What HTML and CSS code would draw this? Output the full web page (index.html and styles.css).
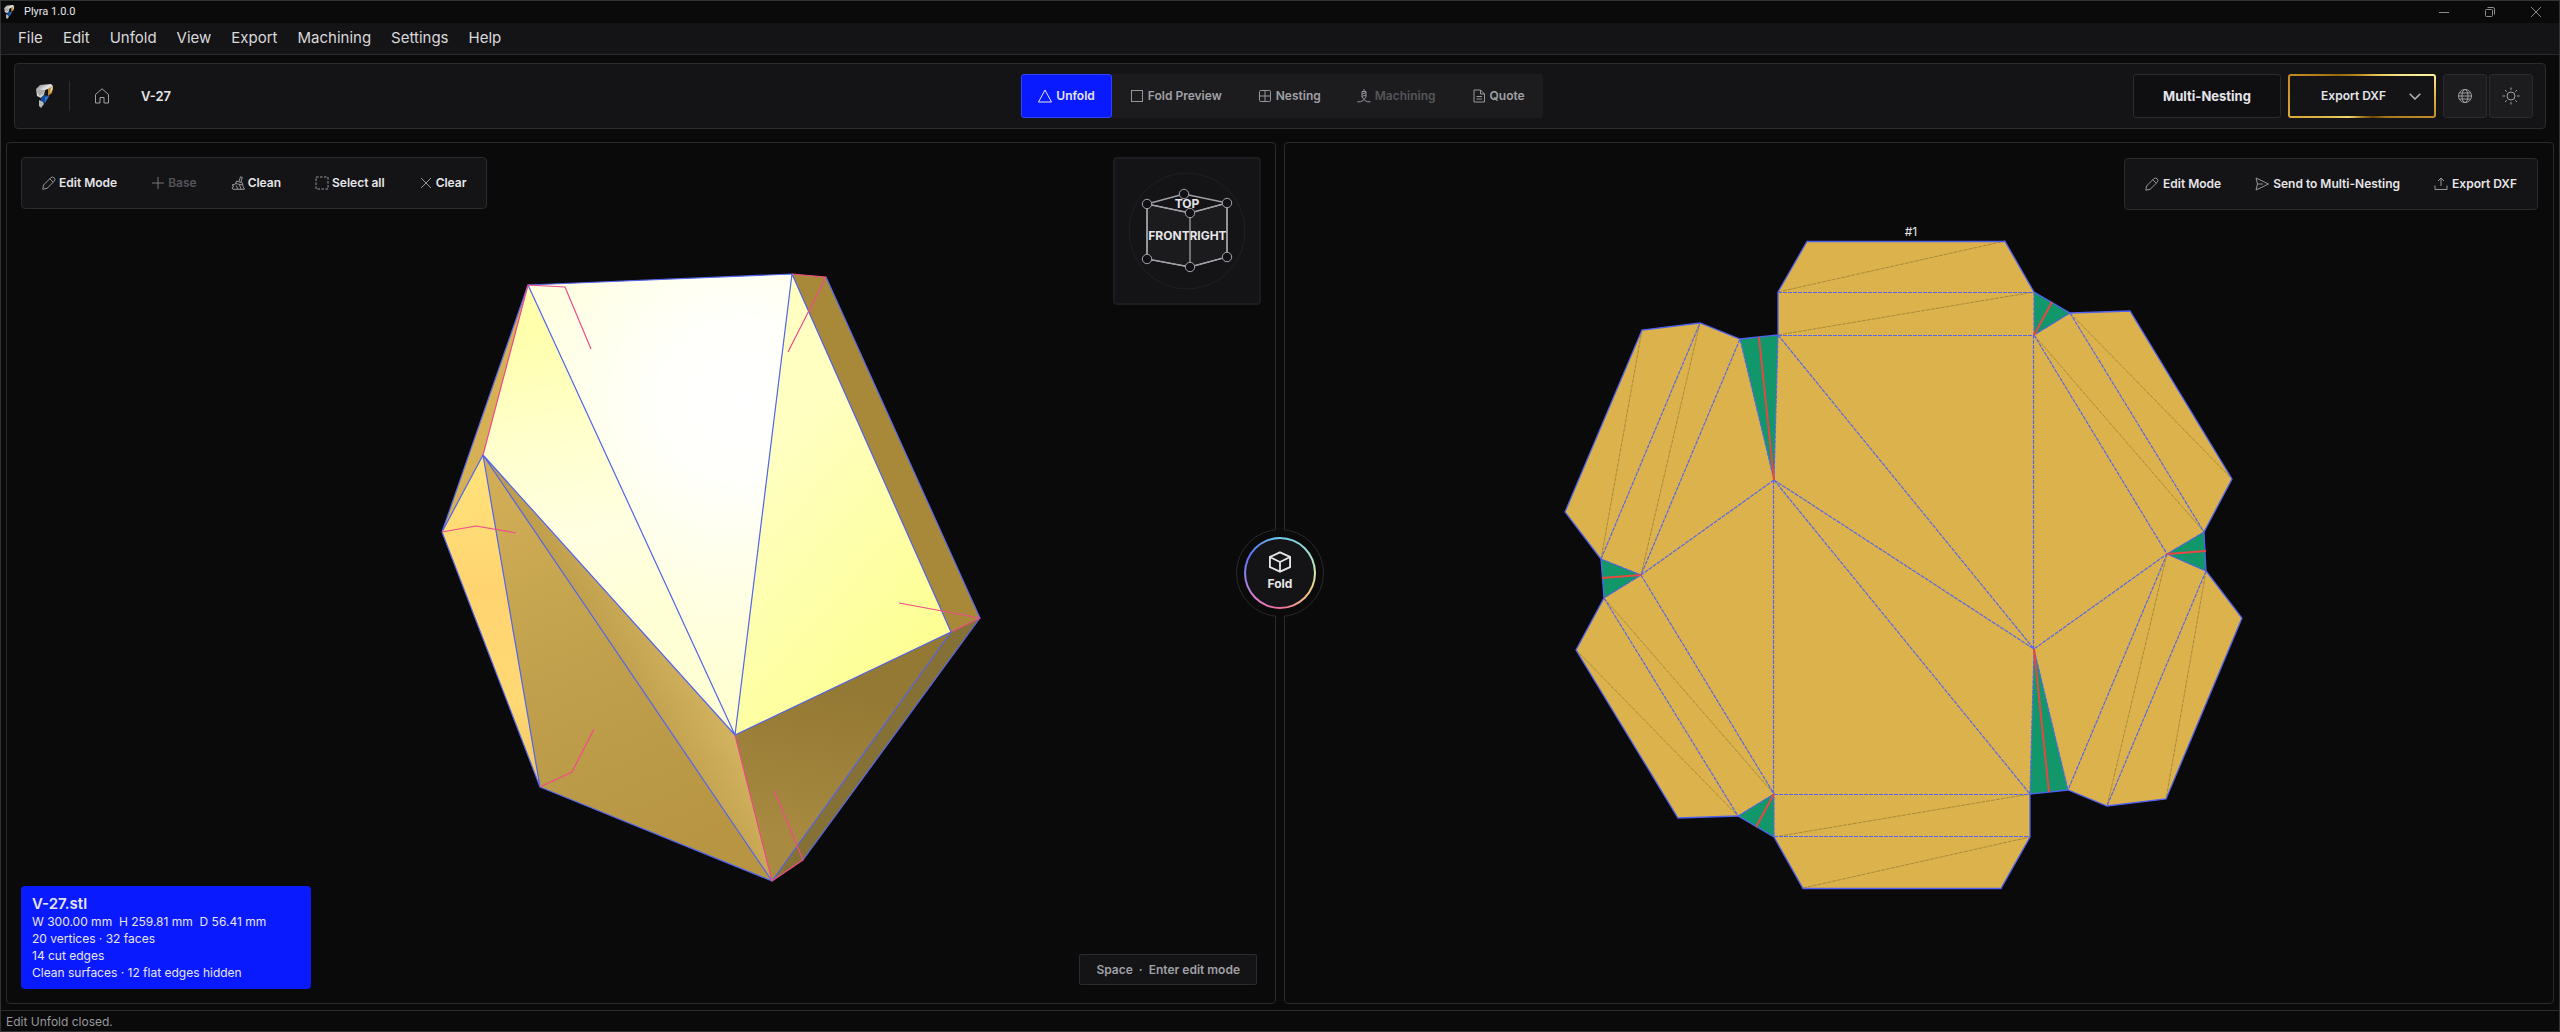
FILE: index.html
```html
<!DOCTYPE html>
<html lang="en">
<head>
<meta charset="utf-8">
<title>Plyra 1.0.0</title>
<link rel="stylesheet" href="styles.css">
</head>
<body>
<svg class="defs" aria-hidden="true">
  <defs>
    <linearGradient id="lg-silver" x1="0" y1="0" x2="1" y2="1"><stop offset="0" stop-color="#77797b"/><stop offset=".45" stop-color="#e4e4e2"/><stop offset="1" stop-color="#8c8d8e"/></linearGradient>
    <symbol id="logo" viewBox="0 0 18 24">
      <path d="M0 5 4 1 15 0 17 2 15 4 9 6 8 11 5 14 1 12Z" fill="url(#lg-silver)"/>
      <path d="M0 5 5 6 9 6 7 10 3 12Z" fill="#a9abac"/>
      <path d="M17 2 16 9 12 12 12 5Z" fill="#b98a3c"/>
      <path d="M15 4 17 2 16.500 6 14 9Z" fill="#f0d49a"/>
      <path d="M5 14 8 11 13 12 9 19 4 18Z" fill="#164a94"/>
      <path d="M9 13 13 12 9 19Z" fill="#2f78cf"/>
      <path d="M3 16 7 18 8 20 5 24 3 22Z" fill="#b5b6b7"/>
    </symbol>
    <symbol id="pencil" viewBox="0 0 14 14"><path d="M.800 13.200 1.600 9 8.800 1.700Q10.500.300 12.200 1.800 13.800 3.500 12.300 5.200L5 12.400ZM7.800 2.800 11.200 6.200"/></symbol>
    <symbol id="plus" viewBox="0 0 14 14"><path d="M7 1V13M1 7H13"/></symbol>
    <symbol id="broom" viewBox="0 0 14 14"><path d="M8 5.500 9.500.800 11.300 1.300 10 6M5.500 5 11.500 7 12 10.500 13.500 13.300H2L1 11.500 3 10.500 1 9 4.500 8ZM5 9.500 7 13M8.500 9 10 13M4.500 7.500 11.500 9"/></symbol>
    <symbol id="select" viewBox="0 0 14 14"><rect x="1" y="1" width="12" height="12" stroke-dasharray="2.600 1.400"/></symbol>
    <symbol id="cross" viewBox="0 0 14 14"><path d="M2 2 12 12M12 2 2 12"/></symbol>
    <symbol id="send" viewBox="0 0 14 14"><path d="M1 1 13.500 7 1 13 2.500 7ZM2.500 7H8"/></symbol>
    <symbol id="upload" viewBox="0 0 14 14"><path d="M7 9V1M4 4 7 1 10 4M1 8.500V12.500H13V8.500"/></symbol>
    <symbol id="triangle" viewBox="0 0 14 14"><path d="M7 1 13.500 13H.500Z" stroke-linejoin="round"/></symbol>
    <symbol id="square" viewBox="0 0 14 14"><rect x="1.500" y="1.500" width="11" height="11"/></symbol>
    <symbol id="grid" viewBox="0 0 14 14"><rect x="1.500" y="1.500" width="11" height="11" rx="1"/><path d="M7 1.500V12.500M1.500 7H12.500"/></symbol>
    <symbol id="drill" viewBox="0 0 14 14"><path d="M7 0V2M5 2.500H9V8L7 10.500 5 8ZM5 5 9 3.500M5 7.500 9 6M7 10.500V12M.500 12.800H3.500L6 11.500M13.500 12.800H10.500L8 11.500"/></symbol>
    <symbol id="doc" viewBox="0 0 14 14"><path d="M2 1H8.500L12.500 5V13H2ZM8.500 1V5H12.500M4.500 7.500H10M4.500 10H10"/></symbol>
    <symbol id="home" viewBox="0 0 16 16"><path d="M1.500 6.500 8 .800 14.500 6.500V15H10V9.500H6V15H1.500Z"/></symbol>
    <symbol id="globe" viewBox="0 0 16 16"><circle cx="8" cy="8" r="6.500"/><ellipse cx="8" cy="8" rx="3" ry="6.500"/><path d="M1.500 8H14.500M2.500 5H13.500M2.500 11H13.500"/></symbol>
    <symbol id="sun" viewBox="0 0 18 18"><circle cx="9" cy="9" r="4"/><path d="M9 .500V3M9 15V17.500M.500 9H3M15 9H17.500M3 3 4.700 4.700M13.300 13.300 15 15M3 15 4.700 13.300M13.300 4.700 15 3"/></symbol>
    <symbol id="cube" viewBox="0 0 24 24"><path d="M12 1.500 23 6.500V17.500L12 22.500 1 17.500V6.500ZM1 6.500 12 12 23 6.500M12 12V22.500"/></symbol>
  </defs>
</svg>

<div class="window">
  <header class="titlebar">
    <svg class="titlebar-logo"><use href="#logo"/></svg>
    <span class="titlebar-name">Plyra 1.0.0</span>
    <div class="window-controls">
      <button type="button" aria-label="Minimize"><svg viewBox="0 0 10 10"><path d="M0 5.500H10"/></svg></button>
      <button type="button" aria-label="Restore"><svg viewBox="0 0 10 10"><rect x=".500" y="2.500" width="7" height="7" rx="1"/><path d="M2.500.500H8Q9.500.500 9.500 2V7.500"/></svg></button>
      <button type="button" aria-label="Close"><svg viewBox="0 0 10 10"><path d="M0 0 10 10M10 0 0 10"/></svg></button>
    </div>
  </header>

  <nav class="menubar" aria-label="Main menu">
    <button type="button">File</button>
    <button type="button">Edit</button>
    <button type="button">Unfold</button>
    <button type="button">View</button>
    <button type="button">Export</button>
    <button type="button">Machining</button>
    <button type="button">Settings</button>
    <button type="button">Help</button>
  </nav>

  <div class="header">
    <div class="header-left">
      <svg class="brand"><use href="#logo"/></svg>
      <span class="divider"></span>
      <button type="button" class="home" aria-label="Home"><svg><use href="#home"/></svg></button>
      <span class="project">V-27</span>
    </div>
    <div class="tabs">
      <button type="button" class="tab tab-active"><svg class="icon"><use href="#triangle"/></svg>Unfold</button>
      <button type="button" class="tab"><svg class="icon"><use href="#square"/></svg>Fold Preview</button>
      <button type="button" class="tab"><svg class="icon"><use href="#grid"/></svg>Nesting</button>
      <button type="button" class="tab" disabled><svg class="icon"><use href="#drill"/></svg>Machining</button>
      <button type="button" class="tab"><svg class="icon"><use href="#doc"/></svg>Quote</button>
    </div>
    <div class="header-right">
      <button type="button" class="multi">Multi-Nesting</button>
      <button type="button" class="export"><span>Export DXF</span><svg viewBox="0 0 12 7"><path d="M.700.700 6 6 11.300.700"/></svg></button>
      <div class="square-buttons">
        <button type="button" class="square" aria-label="Language"><svg class="globe"><use href="#globe"/></svg></button>
        <button type="button" class="square" aria-label="Theme"><svg class="sun"><use href="#sun"/></svg></button>
      </div>
    </div>
  </div>

  <main class="workspace">
    <section class="panel" aria-label="3D view">
      <svg class="scene" viewBox="7 143 1268 860">
        <defs>
          <linearGradient id="f1" gradientUnits="userSpaceOnUse" x1="480" y1="460" x2="490" y2="780"><stop offset="0" stop-color="#ffe37c"/><stop offset=".4" stop-color="#ffd470"/><stop offset=".75" stop-color="#ffd974"/><stop offset="1" stop-color="#f0c766"/></linearGradient>
          <linearGradient id="f2" gradientUnits="userSpaceOnUse" x1="500" y1="480" x2="660" y2="860"><stop offset="0" stop-color="#d1ae56"/><stop offset=".5" stop-color="#c0a04c"/><stop offset="1" stop-color="#b79543"/></linearGradient>
          <linearGradient id="f3" gradientUnits="userSpaceOnUse" x1="590" y1="640" x2="660" y2="600"><stop offset="0" stop-color="#bd9c4a"/><stop offset="1" stop-color="#d3b460"/></linearGradient>
          <linearGradient id="f4" gradientUnits="userSpaceOnUse" x1="545" y1="330" x2="600" y2="620"><stop offset="0" stop-color="#ffffac"/><stop offset=".35" stop-color="#ffffcc"/><stop offset=".7" stop-color="#ffffe2"/><stop offset="1" stop-color="#ffffd6"/></linearGradient>
          <radialGradient id="f5" gradientUnits="userSpaceOnUse" cx="740" cy="400" r="330"><stop offset="0" stop-color="#ffffff"/><stop offset=".25" stop-color="#fffffb"/><stop offset=".6" stop-color="#ffffe4"/><stop offset="1" stop-color="#ffffcc"/></radialGradient>
          <linearGradient id="f6" gradientUnits="userSpaceOnUse" x1="760" y1="460" x2="940" y2="620"><stop offset="0" stop-color="#ffffc2"/><stop offset="1" stop-color="#fdff94"/></linearGradient>
          <linearGradient id="f7" gradientUnits="userSpaceOnUse" x1="830" y1="690" x2="800" y2="840"><stop offset="0" stop-color="#947934"/><stop offset="1" stop-color="#a88a40"/></linearGradient>
        </defs>
        <path class="face" fill="#d6b055" d="M528 285 483 455 442 532Z"/>
        <path class="face" fill="url(#f1)" d="M483 455 442 532 540 787Z"/>
        <path class="face" fill="url(#f2)" d="M483 455 540 787 772 881Z"/>
        <path class="face" fill="url(#f3)" d="M483 455 772 881 735 735Z"/>
        <path class="face" fill="url(#f4)" d="M528 285 483 455 735 735Z"/>
        <path class="face" fill="url(#f5)" d="M528 285 792 274 735 735Z"/>
        <path class="face" fill="url(#f6)" d="M792 274 735 735 951 632Z"/>
        <path class="face" fill="#a78939" d="M792 274 826 277 980 618 951 632Z"/>
        <path class="face" fill="url(#f7)" d="M735 735 951 632 772 881Z"/>
        <path class="face" fill="#857036" d="M951 632 980 618 803 860 772 881Z"/>
        <path class="fold" d="M442 532 528 285 792 274 735 735 528 285M792 274 951 632 735 735 483 455 442 532 540 787 772 881 483 455 540 787M826 277 980 618 803 860M772 881 951 632"/>
        <path class="cut" d="M483 455 528 285 565 287 591 349M792 274 826 277 788 352M442 532 476 526 516 533M899 603 980 618 951 632M540 787 572 772 594 729M735 735 772 881 803 860 774 790"/>
      </svg>
      <div class="toolbar">
        <button type="button"><svg class="icon"><use href="#pencil"/></svg>Edit Mode</button>
        <button type="button" disabled><svg class="icon"><use href="#plus"/></svg>Base</button>
        <button type="button"><svg class="icon"><use href="#broom"/></svg>Clean</button>
        <button type="button"><svg class="icon"><use href="#select"/></svg>Select all</button>
        <button type="button"><svg class="icon"><use href="#cross"/></svg>Clear</button>
      </div>
      <div class="viewcube">
        <svg viewBox="1115 159 144 144">
          <circle cx="1187" cy="231" r="58" fill="none" stroke="#202023"/>
          <path d="M1147 204 1190 213 1227 203V257L1190 267 1147 259Z" fill="#1b1b1e"/>
          <g class="cube-labels"><text x="1187" y="208">TOP</text><text x="1169" y="240">FRONT</text><text x="1208" y="240">RIGHT</text></g>
          <path d="M1147 204 1184 194 1227 203 1190 213ZM1147 204V259L1190 267 1227 257V203M1190 213V267" fill="none" stroke="#a09fa8" stroke-width="1.300"/>
          <g fill="#111113" stroke="#a5a4ad"><circle cx="1184" cy="194" r="4.700"/><circle cx="1147" cy="204" r="4.700"/><circle cx="1227" cy="203" r="4.700"/><circle cx="1190" cy="213" r="4.700"/><circle cx="1147" cy="259" r="4.700"/><circle cx="1190" cy="267" r="4.700"/><circle cx="1227" cy="257" r="4.700"/></g>
        </svg>
      </div>
      <div class="info">
        <strong>V-27.stl</strong>
        <span>W 300.00 mm&nbsp; H 259.81 mm&nbsp; D 56.41 mm</span>
        <span>20 vertices · 32 faces</span>
        <span>14 cut edges</span>
        <span>Clean surfaces · 12 flat edges hidden</span>
      </div>
      <div class="hint">Space &nbsp;·&nbsp; Enter edit mode</div>
    </section>

    <section class="panel" aria-label="Flat pattern">
      <svg class="scene" viewBox="1285 143 1268 860">
        <path fill="#dbb24b" d="M1807 241 1778 292V335L1740 339 1700 323 1642 330 1565 512 1601 559 1641 575 1604 598 1576 650 1678 818 1738 816 1774 794V837L1803 888H2001L2030 837V794L2068 790 2107 806 2166 799 2242 618 2206 571 2167 554 2204 532 2232 479 2130 311 2070 313 2034 335V292L2005 241Z"/>
        <path fill="#11976a" d="M1740 339 1778 335 1774 480ZM2034 292 2070 313 2034 335ZM2204 532 2206 571 2167 554ZM1601 559 1641 575 1604 598ZM1738 816 1774 794V837ZM2034 649 2030 794 2068 790Z"/>
        <path class="hidden-edge" d="M1778 292 2005 241M1778 335 2034 292M1642 330 1601 559M1700 323 1641 575M2070 313 2232 479M2034 335 2204 532M1576 650 1738 816M1604 598 1774 794M1774 837 2030 794M1803 888 2030 837M2167 554 2107 806M2206 571 2166 799"/>
        <path class="bend" d="M1778 292.500H2034M1778 335.500H2034M1778 335 2034 649M1774 480 2034 649M1774 480 2030 794M1773.500 480V794M2033.500 335V649M1774 794.500H2030M1774 836.500H2030M1774 480 1641 575 1740 339M1601 559 1700 323M1641 575 1774 794M1604 598 1738 816M2034 335 2167 554 2034 649M2070 313 2204 532M2167 554 2068 790M2206 571 2107 806M1778 335 1774 480 1740 339M2034 292V335L2070 313M2204 532 2167 554 2206 571M1601 559 1641 575 1604 598M1738 816 1774 794V837M2030 794 2034 649 2068 790"/>
        <path class="outline" d="M1807 241.500 1778 292V335L1740 339 1700 323 1642 330 1565 512 1601 559 1604 598 1576 650 1678 818 1738 816 1774 837 1803 888.500H2001L2030 837V794L2068 790 2107 806 2166 799 2242 618 2206 571 2204 532 2232 479 2130 311 2070 313 2034 292 2005 241.500Z"/>
        <path class="relief" d="M1759 337 1774 480M2052 302 2034 335M2206 551 2167 554M1602 578 1641 575M1756 827 1774 794M2049 792 2034 649"/>
        <text class="part-label" x="1911" y="236">#1</text>
      </svg>
      <div class="toolbar toolbar-right">
        <button type="button"><svg class="icon"><use href="#pencil"/></svg>Edit Mode</button>
        <button type="button"><svg class="icon"><use href="#send"/></svg>Send to Multi-Nesting</button>
        <button type="button"><svg class="icon"><use href="#upload"/></svg>Export DXF</button>
      </div>
    </section>

    <div class="fold-ring">
      <button type="button" class="fold-button"><svg><use href="#cube"/></svg>Fold</button>
    </div>
  </main>

  <footer class="statusbar">Edit Unfold closed.</footer>
</div>
</body>
</html>
```
FILE: styles.css
```css
:root {
  --bg: #0a0a0a;
  --surface: #141416;
  --raised: #1c1c1e;
  --line: #2b2b2f;
  --text: #e6e6ea;
  --muted: #a0a0a6;
  --dim: #55555b;
  --blue: #0a1aff;
}

* { box-sizing: border-box; }

body {
  margin: 0;
  background: var(--bg);
  color: var(--text);
  font-family: Inter, "Liberation Sans", sans-serif;
  font-size: 12px;
  line-height: 16px;
}

button {
  margin: 0;
  padding: 0;
  border: 0;
  background: none;
  color: inherit;
  font: inherit;
}

svg { display: block; fill: none; stroke: currentColor; }

.defs { position: absolute; width: 0; height: 0; }

.icon { width: 14px; height: 14px; flex: none; color: #96969c; }

.window {
  display: flex;
  flex-direction: column;
  min-height: 100vh;
  border: 1px solid #333335;
}

.titlebar {
  display: flex;
  align-items: center;
  height: 22px;
  padding-left: 3px;
}
.titlebar-logo { width: 11px; height: 14px; stroke: none; }
.titlebar-name { margin-left: 9px; font-family: Roboto, sans-serif; font-size: 11px; }
.window-controls { display: flex; margin-left: auto; }
.window-controls button { display: grid; place-items: center; width: 46px; height: 20px; color: #8c8c8c; }
.window-controls svg { width: 10px; height: 10px; }

.menubar {
  display: flex;
  align-items: center;
  gap: 20px;
  height: 32px;
  padding-left: 17px;
  border-bottom: 1px solid var(--line);
  background: var(--surface);
  font-size: 15px;
  color: #d9d9dc;
}
.menubar button { padding-bottom: 1px; }

.header {
  display: grid;
  grid-template-columns: 1fr auto 1fr;
  align-items: center;
  height: 66px;
  margin: 8px 13px 0;
  padding: 0 12px 0 16px;
  border: 1px solid var(--line);
  border-radius: 4px;
  background: var(--surface);
}
.header-left { display: flex; align-items: center; padding-left: 5px; }
.brand { width: 18px; height: 24px; stroke: none; }
.divider { width: 1px; height: 30px; margin-left: 15px; background: var(--line); }
.home { margin-left: 24px; color: var(--muted); }
.home svg { width: 16px; height: 16px; }
.project { margin-left: 31px; font-size: 13px; font-weight: 600; }

.tabs { display: flex; border-radius: 3px; background: var(--raised); }
.tab {
  display: flex;
  align-items: center;
  gap: 4px;
  height: 44px;
  padding: 0 18px;
  color: var(--muted);
  font-weight: 600;
}
.tab:disabled { color: var(--dim); }
.tab-active { padding: 0 16px; border: 1px solid #3042ff; border-radius: 3px; background: var(--blue); color: var(--text); }
.tab-active .icon { color: var(--text); }

.header-right { display: flex; justify-content: flex-end; gap: 7px; }
.multi, .export { width: 148px; height: 44px; border-radius: 3px; font-weight: 600; }
.multi { border: 1px solid var(--line); background: #0f0f11; font-size: 13px; font-weight: 700; }
.export {
  display: flex;
  align-items: center;
  justify-content: flex-end;
  gap: 23px;
  padding-right: 13px;
  border: 2px solid transparent;
  background:
    linear-gradient(var(--surface), var(--surface)) padding-box,
    conic-gradient(#c8922a, #e8c85a 40deg, #fdf0a0 73deg, #dcb450 90deg, #c08a2a 107deg, #a87420 130deg, #6a4408 152deg, #b8862c 185deg, #f0d878 214deg, #d9a93a 253deg, #c48a24 286deg, #9a6510 310deg, #c8922a) border-box;
}
.export svg { width: 12px; height: 7px; stroke-width: 1.500; color: #b4b4ba; }
.square-buttons { display: flex; gap: 2px; }
.square {
  display: grid;
  place-items: center;
  width: 44px;
  height: 44px;
  border: 1px solid var(--line);
  border-radius: 3px;
  background: var(--raised);
  color: var(--muted);
}
.globe { width: 16px; height: 16px; }
.sun { width: 18px; height: 18px; }

.workspace {
  position: relative;
  display: flex;
  flex: 1;
  gap: 8px;
  margin: 13px 5px 6px;
}
.panel {
  position: relative;
  display: grid;
  grid-template: auto 1fr auto / auto 1fr auto;
  flex: 1;
  min-height: 480px;
  padding: 14px;
  border: 1px solid var(--line);
  border-radius: 4px;
}

.scene { position: absolute; inset: 0; width: 100%; height: 100%; }
.face { stroke: none; }
.scene > path { stroke: none; }
.scene > .fold { stroke: #5567f0; stroke-linejoin: round; stroke-width: 1.200; }
.scene > .cut { stroke: #f04b8c; stroke-linejoin: round; stroke-width: 1.200; }
.scene > .outline { stroke: #4f62f2; stroke-width: 1.300; }
.scene > .bend { stroke: #5666f0; stroke-width: 1.200; stroke-dasharray: 4 1; }
.scene > .hidden-edge { stroke: #a88b3a; stroke-width: 1; stroke-dasharray: 4 1; }
.scene > .relief { stroke: #ea4743; stroke-width: 2; }
.part-label { fill: var(--text); stroke: none; font-size: 12px; text-anchor: middle; }

.toolbar {
  position: relative;
  grid-area: 1 / 1;
  display: flex;
  align-self: start;
  padding: 0 3px;
  border: 1px solid var(--line);
  border-radius: 4px;
  background: var(--surface);
  font-weight: 600;
}
.toolbar button { display: flex; align-items: center; gap: 3px; height: 50px; padding: 0 17px; }
.toolbar button:disabled { color: var(--dim); }
.toolbar button:disabled .icon { color: #77777d; }
.toolbar-right { grid-area: 1 / 3; margin: 1px 1px 0 0; }
.toolbar-right button { gap: 4px; }

.viewcube {
  position: relative;
  grid-area: 1 / 3;
  justify-self: end;
  width: 148px;
  height: 148px;
  border: 2px solid #1d1d21;
  border-radius: 4px;
  background: var(--surface);
}
.cube-labels { fill: var(--text); stroke: none; font-size: 12px; font-weight: 700; text-anchor: middle; }

.info {
  position: relative;
  grid-area: 3 / 1;
  display: flex;
  flex-direction: column;
  align-self: end;
  width: 290px;
  padding: 8px 11px;
  border-radius: 4px;
  background: var(--blue);
  line-height: 17px;
}
.info strong { font-size: 15px; font-weight: 600; line-height: 19px; }

.hint {
  position: relative;
  grid-area: 3 / 3;
  align-self: end;
  justify-self: end;
  margin: 0 4px 4px 0;
  padding: 7px 16px;
  line-height: 15px;
  border: 1px solid var(--line);
  border-radius: 2px;
  background: var(--surface);
  color: var(--muted);
  font-weight: 600;
}

.fold-ring {
  position: absolute;
  top: 50%;
  left: 50%;
  display: grid;
  place-items: center;
  width: 88px;
  height: 88px;
  border: 1px solid #29292c;
  border-radius: 50%;
  background: var(--bg);
  transform: translate(-50%, -50%);
}
.fold-ring::before {
  position: absolute;
  top: -1px;
  bottom: -1px;
  width: 8px;
  background: var(--bg);
  content: "";
}
.fold-button {
  position: relative;
  display: flex;
  flex-direction: column;
  align-items: center;
  justify-content: center;
  gap: 3px;
  width: 72px;
  height: 72px;
  padding-bottom: 3px;
  border: 2px solid transparent;
  border-radius: 50%;
  background:
    linear-gradient(var(--surface), var(--surface)) padding-box,
    conic-gradient(#6ec8ea, #9be0d0 55deg, #d0eab0 90deg, #f2cf80 120deg, #f0a090 150deg, #ea6a9a 180deg, #d580d0 225deg, #9080f0 265deg, #5a70f5 300deg, #6ec8ea) border-box;
  font-weight: 700;
}
.fold-button svg { width: 24px; height: 22px; stroke-width: 2; }

.statusbar {
  height: 21px;
  padding-left: 5px;
  border-top: 1px solid var(--line);
  color: #98989e;
  line-height: 22px;
}
```
